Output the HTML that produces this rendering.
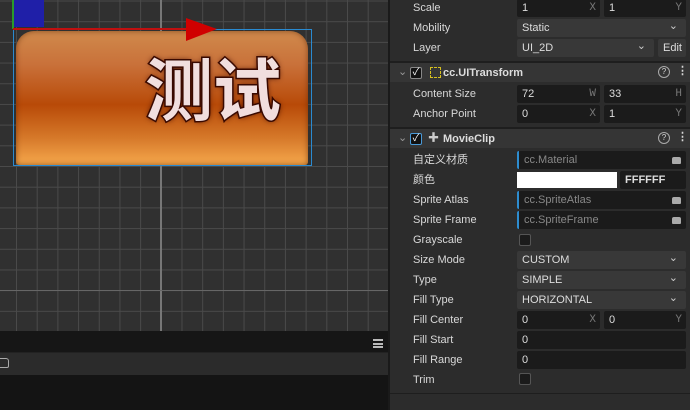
<!DOCTYPE html>
<html><head><meta charset="utf-8"><style>
*{margin:0;padding:0;box-sizing:border-box}
body{width:690px;height:410px;overflow:hidden;background:#2c2c2c;font-family:"Liberation Sans","Noto Sans CJK SC",sans-serif;font-size:11px;line-height:13px;color:#d6d6d6;position:relative}
.scene{position:absolute;left:0;top:0;width:388px;height:331px;background-color:#303030;
background-image:linear-gradient(90deg,#4a4a4a 1px,transparent 1px),linear-gradient(0deg,#4a4a4a 1px,transparent 1px);
background-size:20.7px 20.7px;background-position:16px 1.5px;overflow:hidden}
.vmaj{position:absolute;left:160px;top:0;width:2px;height:331px;background:#777}
.hmaj{position:absolute;left:0;top:290px;width:388px;height:1px;background:#666}
.btn{position:absolute;left:16px;top:31px;width:292px;height:134px;border-radius:18px 18px 3px 3px;
background:linear-gradient(180deg,#d08a4c 0%,#c9713a 25%,#b84a08 55%,#d6792a 80%,#f6a84c 100%);box-shadow:inset 0 0 6px rgba(80,30,0,.6)}
.txt{position:absolute;left:145px;top:52px;font-size:68px;font-weight:bold;color:#f1dede;font-family:"Noto Sans CJK SC",sans-serif;line-height:1;
-webkit-text-stroke:3px #3a0a00;paint-order:stroke fill;text-shadow:0 0 6px #3a0a00}
.panel{position:absolute;left:388px;top:0;width:302px;height:410px;background:#2c2c2c;border-left:2px solid #1a1a1a}
.row{position:absolute;left:0;width:300px;height:20px}
.lbl{position:absolute;left:23px;top:4px;color:#d8d8d8;line-height:13px}
.inp{position:absolute;top:1px;height:18px;background:#1b1b1b;border-radius:2px;padding:3px 5px;color:#ddd;line-height:13px}
.sel{background:#383838}
.hdr{position:absolute;left:0;width:300px;height:21px;background:#353535;border-top:2px solid #1e1e1e}
.unit{position:absolute;right:4px;top:3px;color:#777;font-family:"Liberation Mono",monospace;font-size:11px}
.chev{position:absolute;right:8px;top:1px;color:#ccc;font-size:11px}
.cb{position:absolute;width:12px;height:12px;border:1px solid #555;background:#1b1b1b;border-radius:2px}
.lock{position:absolute;right:5px;top:6px;width:9px;height:7px;background:#aaa;border-radius:2px 2px 1px 1px}
.ref{border-left:2px solid #2d8ccf;color:#888}
</style></head><body>
<div class="scene">
<div class="vmaj"></div><div class="hmaj"></div>
<div style="position:absolute;left:13px;top:29px;width:299px;height:137px;border:1px solid #2a8ad0"></div>
<div class="btn"></div>
<div class="txt">测试</div>
<div style="position:absolute;left:13px;top:0;width:31px;height:27px;background:#1f1fa8"></div>
<div style="position:absolute;left:12px;top:0;width:2px;height:29px;background:#2a9a2a"></div>
<div style="position:absolute;left:13px;top:28px;width:180px;height:2px;background:#c01010"></div>
<svg style="position:absolute;left:185px;top:17px" width="33" height="25"><polygon points="1,1 32,12 1,24" fill="#d00000"/></svg>
</div>
<div style="position:absolute;left:0;top:331px;width:388px;height:21px;background:#161616"></div>
<div style="position:absolute;left:373px;top:339px;width:10px;height:9px;border-top:2px solid #bbb;border-bottom:2px solid #bbb"><div style="margin-top:1.5px;height:2px;background:#bbb"></div></div>
<div style="position:absolute;left:0;top:352px;width:388px;height:23px;background:#2b2b2b;border-top:1px solid #222"></div>
<div style="position:absolute;left:0;top:358px;width:9px;height:10px;border:1px solid #aaa;border-left:none;border-radius:0 3px 2px 0"></div>
<div style="position:absolute;left:0;top:375px;width:388px;height:35px;background:#141414"></div>

<div class="panel">
<div class="row" style="top:-2px"><span class="lbl">Scale</span><div class="inp" style="left:127px;width:83px">1<span class="unit">X</span></div><div class="inp" style="left:214px;width:82px">1<span class="unit">Y</span></div></div>
<div class="row" style="top:18px"><span class="lbl">Mobility</span><div class="inp sel" style="left:127px;width:169px">Static<span class="chev">⌄</span></div></div>
<div class="row" style="top:38px"><span class="lbl">Layer</span><div class="inp sel" style="left:127px;width:137px">UI_2D<span class="chev">⌄</span></div><div class="inp sel" style="left:268px;width:28px;padding-left:5px">Edit</div></div>
<div class="hdr" style="top:61px"><span style="position:absolute;left:8px;top:3px;color:#999">⌄</span><div class="cb" style="left:20px;top:4px;background:#111;border-color:#888;color:#fff;font-size:10px;line-height:10px;text-align:center">✓</div><div style="position:absolute;left:40px;top:4px;width:11px;height:11px;border:1px dashed #d6c020"></div><b style="position:absolute;left:53px;top:4px;color:#ddd">cc.UITransform</b><span style="position:absolute;left:268px;top:3px;width:12px;height:12px;border:1px solid #aaa;border-radius:50%;font-size:8px;text-align:center;line-height:10px">?</span><span style="position:absolute;left:287px;top:2px;font-weight:bold">⋮</span></div>
<div class="row" style="top:84px"><span class="lbl">Content Size</span><div class="inp" style="left:127px;width:83px">72<span class="unit">W</span></div><div class="inp" style="left:214px;width:82px">33<span class="unit">H</span></div></div>
<div class="row" style="top:104px"><span class="lbl">Anchor Point</span><div class="inp" style="left:127px;width:83px">0<span class="unit">X</span></div><div class="inp" style="left:214px;width:82px">1<span class="unit">Y</span></div></div>
<div class="hdr" style="top:127px"><span style="position:absolute;left:8px;top:3px;color:#999">⌄</span><div class="cb" style="left:20px;top:4px;background:#111;border-color:#4a9ad8;color:#fff;font-size:10px;line-height:10px;text-align:center">✓</div><span style="position:absolute;left:38px;top:3px;color:#ccc">✚</span><b style="position:absolute;left:53px;top:4px;color:#ddd">MovieClip</b><span style="position:absolute;left:268px;top:3px;width:12px;height:12px;border:1px solid #aaa;border-radius:50%;font-size:8px;text-align:center;line-height:10px">?</span><span style="position:absolute;left:287px;top:2px;font-weight:bold">⋮</span></div>
<div class="row" style="top:150px"><span class="lbl">自定义材质</span><div class="inp ref" style="left:127px;width:169px">cc.Material<span class="lock"></span></div></div>
<div class="row" style="top:170px"><span class="lbl">颜色</span><div style="position:absolute;left:127px;top:2px;width:100px;height:16px;background:#fff"></div><div class="inp" style="left:230px;width:66px;font-weight:bold;color:#ddd">FFFFFF</div></div>
<div class="row" style="top:190px"><span class="lbl">Sprite Atlas</span><div class="inp ref" style="left:127px;width:169px">cc.SpriteAtlas<span class="lock"></span></div></div>
<div class="row" style="top:210px"><span class="lbl">Sprite Frame</span><div class="inp ref" style="left:127px;width:169px">cc.SpriteFrame<span class="lock"></span></div></div>
<div class="row" style="top:230px"><span class="lbl">Grayscale</span><div class="cb" style="left:129px;top:4px"></div></div>
<div class="row" style="top:250px"><span class="lbl">Size Mode</span><div class="inp sel" style="left:127px;width:169px">CUSTOM<span class="chev">⌄</span></div></div>
<div class="row" style="top:270px"><span class="lbl">Type</span><div class="inp sel" style="left:127px;width:169px">SIMPLE<span class="chev">⌄</span></div></div>
<div class="row" style="top:290px"><span class="lbl">Fill Type</span><div class="inp sel" style="left:127px;width:169px">HORIZONTAL<span class="chev">⌄</span></div></div>
<div class="row" style="top:310px"><span class="lbl">Fill Center</span><div class="inp" style="left:127px;width:83px">0<span class="unit">X</span></div><div class="inp" style="left:214px;width:82px">0<span class="unit">Y</span></div></div>
<div class="row" style="top:330px"><span class="lbl">Fill Start</span><div class="inp" style="left:127px;width:169px">0</div></div>
<div class="row" style="top:350px"><span class="lbl">Fill Range</span><div class="inp" style="left:127px;width:169px">0</div></div>
<div class="row" style="top:370px"><span class="lbl">Trim</span><div class="cb" style="left:129px;top:3px"></div></div>
<div style="position:absolute;left:0;top:393px;width:300px;height:1px;background:#1e1e1e"></div>
</div>
</body></html>
